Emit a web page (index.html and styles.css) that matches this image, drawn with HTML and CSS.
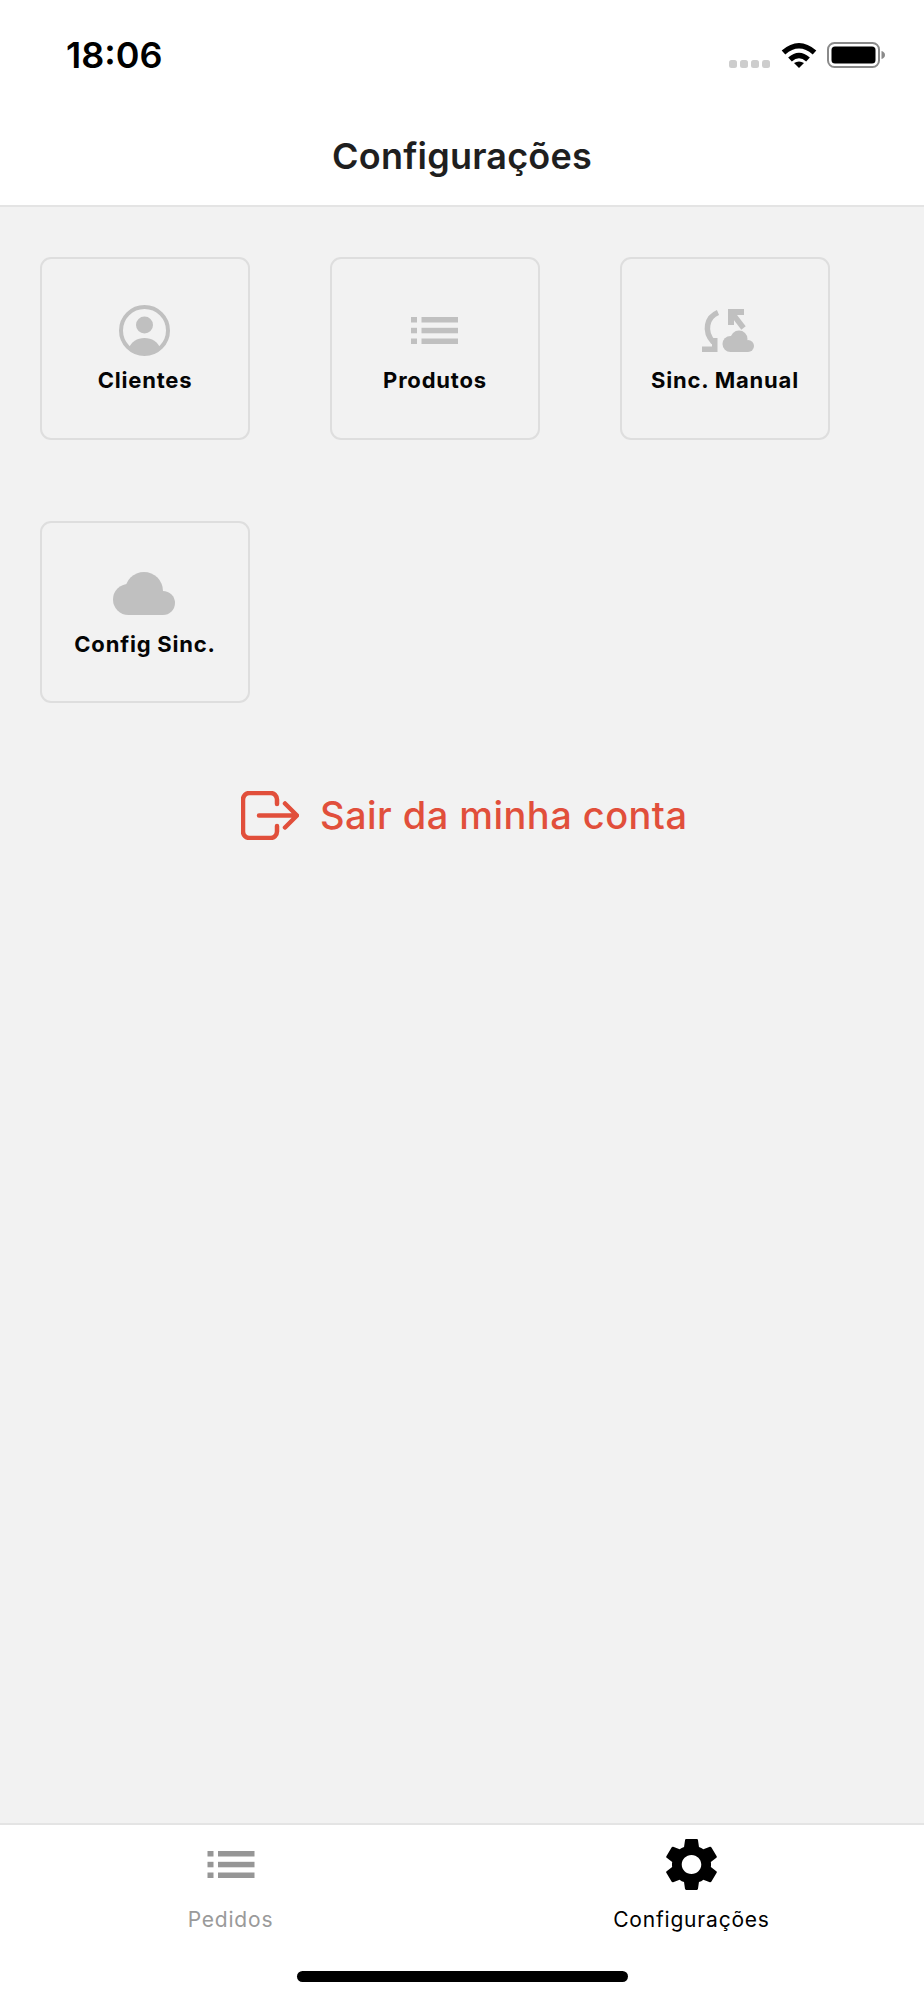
FILE: index.html
```html
<!DOCTYPE html>
<html lang="pt-BR">
<head>
<meta charset="utf-8">
<title>Configurações</title>
<link rel="stylesheet" href="styles.css">
</head>
<body>
<div class="app">
  <header class="top">
    <div class="status">
      <span class="time">18:06</span>
      <div class="status-icons">
        <div class="signal"><i></i><i></i><i></i><i></i></div>
        <svg class="wifi" viewBox="0 0 36 26"><path class="wifi-arc" d="M2.5 10.5Q18-3 33.5 10.5"/><path class="wifi-arc" d="M9 17.5Q18 9.5 27 17.5"/><path d="M13 21Q18 18 23 21L18 26Z"/></svg>
        <svg class="battery" viewBox="0 0 58 26"><rect class="batt-shell" x="1" y="1" width="51" height="24" rx="6.5"/><rect x="4.500" y="4.500" width="44" height="17" rx="3.500"/><path class="batt-nub" d="M54.500 9c2 .5 3.500 2 3.500 4s-1.500 3.500-3.500 4z"/></svg>
      </div>
    </div>
    <h1 class="title">Configurações</h1>
  </header>

  <main class="content">
    <div class="grid">
      <a class="card">
        <span class="card-icon">
          <svg class="ic-user" viewBox="0 0 51 51"><circle class="user-ring" cx="25.500" cy="25.500" r="23.500"/><circle cx="25.500" cy="20" r="8.500"/><path d="M10 43C12 37 18 33 25.500 33S39 37 41 43A23 23 0 0 1 10 43Z"/></svg>
        </span>
        <span class="card-label">Clientes</span>
      </a>
      <a class="card">
        <span class="card-icon">
          <svg class="ic-list" viewBox="0 0 47 27"><rect width="6" height="5.500"/><rect x="10.500" width="36.500" height="5.500"/><rect y="10.800" width="6" height="5.500"/><rect x="10.500" y="10.800" width="36.500" height="5.500"/><rect y="21.500" width="6" height="5.500"/><rect x="10.500" y="21.500" width="36.500" height="5.500"/></svg>
        </span>
        <span class="card-label">Produtos</span>
      </a>
      <a class="card">
        <span class="card-icon">
          <svg class="ic-sync" viewBox="0 0 53 43"><path class="sync-stroke" d="M16 3.500C5 8 1 22 11.500 33.500"/><path d="M0 37.500H10V29H15.500V43H0Z"/><path d="M26 0H42V6H32V16H26Z"/><path class="sync-stroke" d="M30 4L41.500 19"/><circle cx="28.500" cy="35" r="8"/><circle cx="37" cy="30" r="8.500"/><circle cx="46" cy="37" r="6"/><rect x="28" y="32" width="18" height="11"/></svg>
        </span>
        <span class="card-label">Sinc. Manual</span>
      </a>
      <a class="card">
        <span class="card-icon">
          <svg class="ic-cloud" viewBox="0 0 62 43"><circle cx="15.500" cy="27.500" r="15.500"/><circle cx="31" cy="19" r="19"/><circle cx="50" cy="31" r="12"/><rect x="15" y="25" width="35" height="18"/></svg>
        </span>
        <span class="card-label">Config Sinc.</span>
      </a>
    </div>

    <a class="logout">
      <svg class="ic-logout" viewBox="0 0 58 49"><path d="M36 13V8.500A6.500 6.500 0 0 0 29.500 2H8.500A6.500 6.500 0 0 0 2 8.500V40.500A6.500 6.500 0 0 0 8.500 47H29.500A6.500 6.500 0 0 0 36 40.500V35"/><path d="M18 24.500H55.500M44 12.500L56 24.500L44 36.500"/></svg>
      <span>Sair da minha conta</span>
    </a>
  </main>

  <nav class="tabbar">
    <div class="tabs">
      <a class="tab">
        <span class="tab-icon">
          <svg class="ic-tablist" viewBox="0 0 47 27"><rect width="6" height="5.500"/><rect x="10.500" width="36.500" height="5.500"/><rect y="10.800" width="6" height="5.500"/><rect x="10.500" y="10.800" width="36.500" height="5.500"/><rect y="21.500" width="6" height="5.500"/><rect x="10.500" y="21.500" width="36.500" height="5.500"/></svg>
        </span>
        <span class="tab-label">Pedidos</span>
      </a>
      <a class="tab tab-active">
        <span class="tab-icon">
          <svg class="ic-gear" viewBox="2.600 2 18.800 20" preserveAspectRatio="none"><path d="M19.140 12.940c.04-.3.06-.61.06-.94 0-.32-.02-.64-.07-.94l2.030-1.580c.18-.14.23-.41.12-.61l-1.920-3.320c-.12-.22-.37-.29-.59-.22l-2.390.96c-.5-.38-1.030-.7-1.620-.94l-.36-2.540c-.04-.24-.24-.41-.48-.41h-3.840c-.24 0-.43.17-.47.41l-.36 2.540c-.59.24-1.130.57-1.620.94l-2.390-.96c-.22-.08-.47 0-.59.22L2.740 8.870c-.12.21-.08.47.12.61l2.030 1.580c-.05.3-.09.63-.09.94s.02.64.07.94l-2.030 1.580c-.18.14-.23.41-.12.61l1.920 3.320c.12.22.37.29.59.22l2.390-.96c.5.38 1.030.7 1.620.94l.36 2.540c.05.24.24.41.48.41h3.840c.24 0 .44-.17.47-.41l.36-2.540c.59-.24 1.130-.56 1.620-.94l2.390.96c.22.08.47 0 .59-.22l1.920-3.320c.12-.22.07-.47-.12-.61l-2.010-1.580zM12 15.600c-1.980 0-3.600-1.620-3.600-3.600s1.620-3.600 3.600-3.600 3.600 1.620 3.600 3.600-1.620 3.600-3.600 3.600z"/></svg>
        </span>
        <span class="tab-label">Configurações</span>
      </a>
    </div>
    <div class="home-indicator"></div>
  </nav>
</div>
</body>
</html>
```

FILE: styles.css
```css
* { box-sizing: border-box; }

html, body {
  margin: 0;
  padding: 0;
  background: #fff;
}

.app {
  width: 924px;
  height: 2000px;
  display: flex;
  flex-direction: column;
  font-family: Inter, "Liberation Sans", sans-serif;
  color: #000;
}

/* Header */
.top {
  height: 207px;
  flex: none;
  background: #fff;
  border-bottom: 2px solid #e4e4e4;
}

.status {
  height: 134px;
  display: flex;
  justify-content: space-between;
  padding: 33px 39px 0 66px;
}

.time {
  font-size: 36px;
  line-height: 44px;
  font-weight: 600;
}

.status-icons {
  display: flex;
  align-items: flex-end;
  gap: 10px;
  height: 35px;
}

.signal {
  display: flex;
  gap: 3px;
  margin-right: 1px;
}

.signal i {
  width: 8px;
  height: 8px;
  border-radius: 2.5px;
  background: #cdcdcd;
}

.wifi { width: 36px; height: 26px; fill: #000; }
.wifi-arc { fill: none; stroke: #000; stroke-width: 5.5; }

.battery { width: 58px; height: 26px; fill: #000; }
.batt-shell { fill: none; stroke: #8a8a8a; stroke-width: 2; }
.batt-nub { fill: #8a8a8a; }

.title {
  margin: 0;
  text-align: center;
  font-size: 36px;
  line-height: 44px;
  font-weight: 600;
  letter-spacing: 0.2px;
  color: #1f1f1f;
}

/* Content */
.content {
  flex: 1;
  background: #f2f2f2;
  padding: 50px 40px 0;
}

.grid {
  display: flex;
  flex-wrap: wrap;
  column-gap: 80px;
  row-gap: 81px;
}

.card {
  width: 210px;
  height: 182.5px;
  border: 2px solid #dedede;
  border-radius: 11px;
  background: #f2f2f2;
  display: flex;
  flex-direction: column;
  align-items: center;
  padding-top: 45px;
}

.card-icon {
  height: 52px;
  display: flex;
  align-items: center;
  justify-content: center;
  fill: #c0c0c0;
}

.card-icon svg { display: block; }

.ic-user { width: 51px; height: 51px; margin-right: 2px; }
.user-ring { fill: none; stroke: #c0c0c0; stroke-width: 4; }
.ic-list { width: 47px; height: 27px; margin-right: 2px; }
.ic-sync { width: 53px; height: 43px; margin-left: 7px; }
.sync-stroke { fill: none; stroke: #c0c0c0; stroke-width: 5.5; }
.ic-cloud { width: 62px; height: 43px; margin-right: 2px; }

.card-label {
  margin-top: 11px;
  font-size: 22px;
  line-height: 26px;
  font-weight: 700;
  letter-spacing: 0.8px;
  color: #050505;
  white-space: nowrap;
}

/* Logout */
.logout {
  margin: 88px 0 0 201px;
  display: flex;
  align-items: center;
  gap: 21px;
  color: #e14f3b;
  font-size: 38px;
  line-height: 49px;
  font-weight: 550;
  letter-spacing: 0.45px;
}

.ic-logout {
  width: 58px;
  height: 49px;
  flex: none;
  fill: none;
  stroke: #e14f3b;
  stroke-width: 4.5;
  stroke-linecap: round;
  stroke-linejoin: round;
}

/* Tab bar */
.tabbar {
  height: 177px;
  flex: none;
  background: #fff;
  border-top: 2px solid #e4e4e4;
  display: flex;
  flex-direction: column;
}

.tabs {
  display: flex;
  height: 146px;
  padding-right: 2px;
}

.tab {
  flex: 1;
  display: flex;
  flex-direction: column;
  align-items: center;
  color: #9a9a9a;
  padding-top: 13px;
}

.tab-active { color: #000; }

.tab-icon {
  height: 53px;
  display: flex;
  align-items: center;
  justify-content: center;
}

.tab-icon svg { display: block; }

.ic-tablist { width: 48px; height: 27px; fill: #969696; }
.ic-gear { width: 51px; height: 53px; fill: #000; }

.tab-label {
  margin-top: 16px;
  font-size: 21px;
  line-height: 26px;
  font-weight: 400;
  letter-spacing: 0.8px;
}

.home-indicator {
  width: 331px;
  height: 11px;
  border-radius: 6px;
  background: #000;
  margin-left: 297px;
}
```
